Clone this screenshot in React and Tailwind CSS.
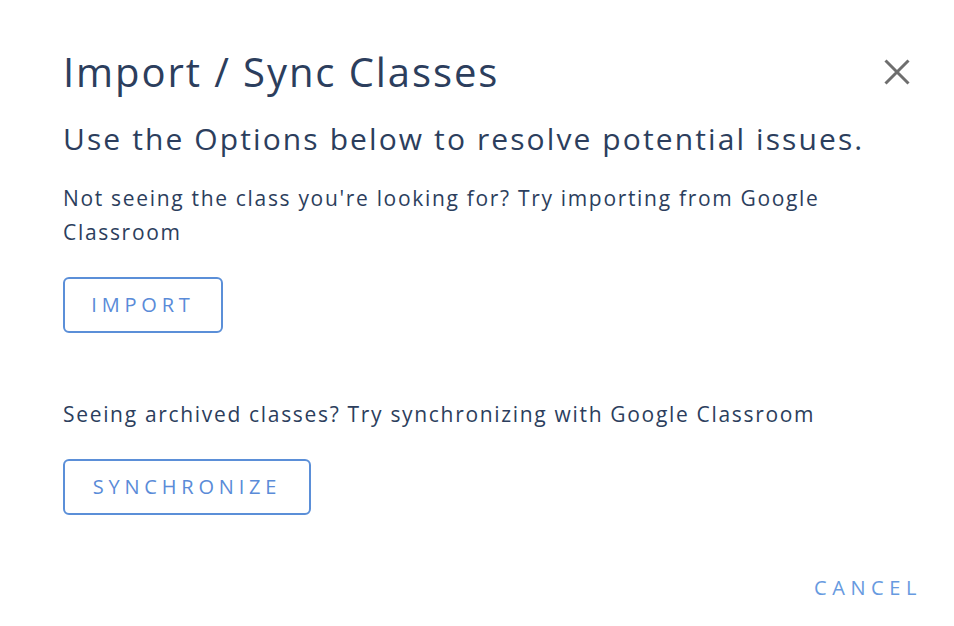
export default function App() {
  const font = { fontFamily: '"Open Sans", "DejaVu Sans", sans-serif' };
  return (
    <div className="w-[954px] h-[626px] bg-white text-[#2c3e5d] pl-[63px] pr-[36px]" style={font}>
      {/* Header */}
      <div className="flex items-center justify-between pt-[48px] pr-[8px]">
        <h1 className="text-[40px] leading-[48px] font-normal tracking-[0.048em]">Import / Sync Classes</h1>
        <button className="text-[#6e6e6e]">
          <svg width="26" height="26" viewBox="0 0 26 26">
            <path d="M1.5 1.5L24.5 24.5M24.5 1.5L1.5 24.5" stroke="currentColor" strokeWidth="3" />
          </svg>
        </button>
      </div>

      <h2 className="mt-[23px] text-[30px] leading-[40px] font-normal tracking-[0.07em]">
        Use the Options below to resolve potential issues.
      </h2>

      <p className="mt-[22px] text-[21px] leading-[34px] w-[800px] tracking-[0.08em]">
        Not seeing the class you're looking for? Try importing from Google Classroom
      </p>
      <button className="mt-[28px] w-[160px] h-[56px] border-2 border-[#5b8fd8] rounded-md text-[#5a8bd8] text-[20px] tracking-[0.24em]">
        IMPORT
      </button>

      <p className="mt-[64px] text-[21px] leading-[34px] tracking-[0.08em]">
        Seeing archived classes? Try synchronizing with Google Classroom
      </p>
      <button className="mt-[28px] w-[248px] h-[56px] border-2 border-[#5b8fd8] rounded-md text-[#5a8bd8] text-[20px] tracking-[0.24em]">
        SYNCHRONIZE
      </button>

      {/* Footer */}
      <div className="flex justify-end mt-[56px] mr-[-4px]">
        <button className="text-[20px] leading-[34px] text-[#679ae0] tracking-[0.28em] pl-[4px]">CANCEL</button>
      </div>
    </div>
  );
}
